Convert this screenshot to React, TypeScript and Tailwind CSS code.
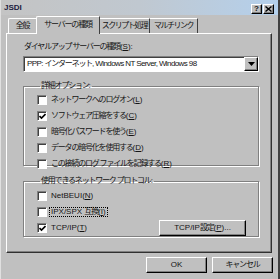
import React from 'react';

const FONT = { fontFamily: '"Liberation Sans", "Noto Sans CJK JP", sans-serif' };

// Japanese runs get tightened so kana come out about as narrow as MS UI Gothic
function J({ children, tight }: { children: React.ReactNode; tight?: boolean }) {
  return <span className={tight ? 'tracking-[-1.5px]' : 'tracking-[-1.2px]'}>{children}</span>;
}

function Check({ checked = false }: { checked?: boolean }) {
  return (
    <span className="w-[10px] h-[10px] shrink-0 bg-white border-t border-l border-t-[#808080] border-l-[#808080] border-b border-r border-b-white border-r-white shadow-[inset_1px_1px_0_#404040] flex items-center justify-center">
      {checked && (
        <svg width="7" height="7" viewBox="0 0 7 7">
          <path d="M0.5 3 L2.5 5 L6.5 1" stroke="#000" strokeWidth="1.6" fill="none" />
        </svg>
      )}
    </span>
  );
}

function Row({ children, k, checked, focus }: { children: React.ReactNode; k: string; checked?: boolean; focus?: boolean }) {
  return (
    <div className="h-[16px] flex items-center gap-[3px]">
      <Check checked={checked} />
      <span className={focus ? 'outline outline-1 outline-dotted outline-[#000] px-[1px] whitespace-nowrap' : 'px-[1px] whitespace-nowrap'}>
        {children}(<u>{k}</u>)
      </span>
    </div>
  );
}

function Btn({ children, className = '' }: { children: React.ReactNode; className?: string }) {
  return (
    <div
      className={
        'h-[16px] flex items-center justify-center bg-[#c0c0c0] border-t border-l border-t-white border-l-white border-b border-r border-b-black border-r-black shadow-[inset_-1px_-1px_0_#808080] whitespace-nowrap ' +
        className
      }
    >
      {children}
    </div>
  );
}

export default function App() {
  return (
    <div
      className="w-[280px] h-[279px] bg-[#c0c0c0] text-[8px] leading-none text-[#141414] flex flex-col overflow-hidden border-l border-l-[#e0e0e0] border-r-2 border-r-[#404040]"
      style={FONT}
    >
      {/* title bar */}
      <div className="h-[15px] shrink-0 flex items-center justify-between pl-[3px] pr-[4px] bg-gradient-to-r from-[#c4c4c4] via-[#c0c8d0] to-[#b4d0ec]">
        <span className="font-bold text-[8px] text-[#202040]">JSDI</span>
        <div className="flex gap-[1px] mt-[2px]">
          <Btn className="w-[11px] !h-[10px] font-bold text-[8px]">?</Btn>
          <Btn className="w-[11px] !h-[10px]">
            <svg width="7" height="6" viewBox="0 0 7 6">
              <path d="M0.5 0.5 L6.5 5.5 M6.5 0.5 L0.5 5.5" stroke="#000" strokeWidth="1.4" />
            </svg>
          </Btn>
        </div>
      </div>

      {/* tabs */}
      <div className="h-[19px] shrink-0 flex items-end pl-[7px] relative z-10">
        <div className="h-[15px] w-[29px] flex items-center justify-center border-t border-l border-white border-r border-r-[#404040] rounded-tl-[2px] mb-[1px]">
          <J>全般</J>
        </div>
        <div className="h-[18px] w-[64px] -ml-[1px] flex items-center justify-center bg-[#c0c0c0] border-t border-l border-white border-r border-r-[#404040] rounded-tl-[2px] pb-[2px]">
          <J>サーバーの種類</J>
        </div>
        <div className="h-[15px] w-[50px] flex items-center justify-center border-t border-white border-r border-r-[#404040] mb-[1px]">
          <J tight>スクリプト処理</J>
        </div>
        <div className="h-[15px] w-[48px] flex items-center justify-center border-t border-white border-r border-r-[#404040] mb-[1px]">
          <J tight>マルチリンク</J>
        </div>
      </div>

      {/* panel */}
      <div className="-mt-[1px] ml-[5px] mr-[6px] h-[220px] shrink-0 border-t border-l border-white border-b border-r border-b-[#303030] border-r-[#303030] shadow-[inset_-1px_-1px_0_#808080] pl-[16px] pr-[12px] pt-[7px]">
        <div className="h-[12px] flex items-center pl-[1px] whitespace-nowrap">
          <J>ダイヤルアップ サーバーの種類</J>(<u>S</u>):
        </div>
        <div className="mt-[3px] h-[16px] bg-white flex items-center border-t border-l border-[#808080] border-b border-r border-b-white border-r-white shadow-[inset_1px_1px_0_#404040]">
          <span className="flex-1 pl-[3px] whitespace-nowrap overflow-hidden tracking-[-0.6px]">
            PPP: <J>インターネット</J>, Windows NT Server, Windows 98
          </span>
          <Btn className="w-[14px] !h-[14px]">
            <svg width="7" height="4" viewBox="0 0 7 4">
              <path d="M0 0 H7 L3.5 4 Z" fill="#000" />
            </svg>
          </Btn>
        </div>

        <fieldset className="mt-[8px] h-[86px] border border-[#808080] shadow-[1px_1px_0_#fff,inset_1px_1px_0_#fff] pl-[13px]">
          <legend className="ml-[3px] px-[1px] leading-[12px]"><J>詳細オプション</J>:</legend>
          <Row k="L"><J>ネットワークへのログオン</J></Row>
          <Row k="C" checked><J>ソフトウェア圧縮をする</J></Row>
          <Row k="E"><J>暗号化パスワードを使う</J></Row>
          <Row k="D"><J>データの暗号化を使用する</J></Row>
          <Row k="R"><J>この接続のログ ファイルを記録する</J></Row>
        </fieldset>

        <fieldset className="mt-[9px] h-[62px] border border-[#808080] shadow-[1px_1px_0_#fff,inset_1px_1px_0_#fff] pl-[13px] pr-[12px] pt-[1px]">
          <legend className="ml-[3px] px-[1px] leading-[12px]"><J>使用できるネットワーク プロトコル</J>:</legend>
          <Row k="N">NetBEUI</Row>
          <Row k="I" focus>IPX/SPX <J>互換</J></Row>
          <div className="flex items-center justify-between">
            <Row k="T" checked>TCP/IP</Row>
            <Btn className="w-[87px] -mt-[1px]">
              TCP/IP <J>設定</J>(<u>P</u>)...
            </Btn>
          </div>
        </fieldset>
      </div>

      {/* footer */}
      <div className="flex justify-end gap-[5px] pr-[5px] mt-[4px]">
        <Btn className="w-[61px]">OK</Btn>
        <Btn className="w-[61px]"><J>キャンセル</J></Btn>
      </div>
    </div>
  );
}
